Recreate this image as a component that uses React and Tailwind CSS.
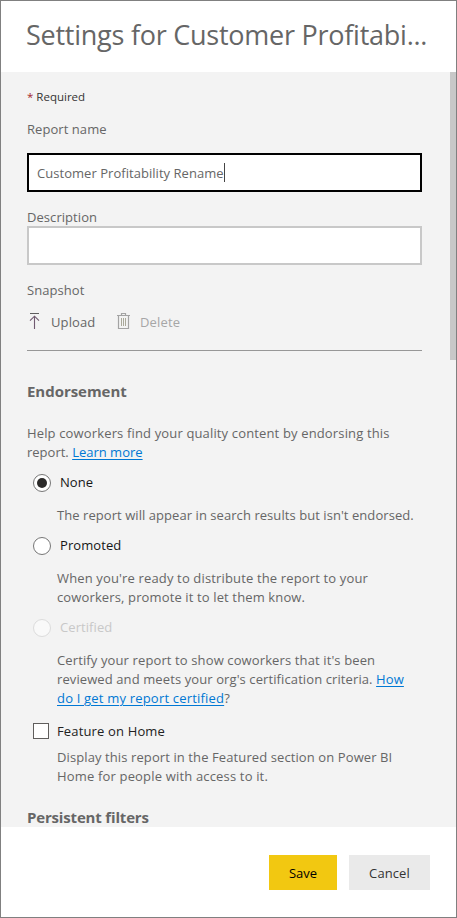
function UploadIcon() {
  return (
    <svg width="12" height="19" viewBox="0 0 12 19" fill="none" className="shrink-0">
      <path d="M1 1.5H10" stroke="#5e5e5e" />
      <path d="M5.5 17V4M1 8.7L5.5 4.2L10 8.7" stroke="#705a70" strokeWidth="1.1" />
    </svg>
  );
}

function TrashIcon() {
  return (
    <svg width="14" height="17" viewBox="0 0 14 17" fill="none" stroke="#a3a3a3" className="shrink-0">
      <path d="M0 2.5H13M4.5 2.5V0.5H8.5V2.5M1.5 2.5V15.5H11.5V2.5" strokeWidth="1.2" />
      <path d="M4.5 5V13M6.5 5V13M8.5 5V13" stroke="#aaa99a" />
    </svg>
  );
}

function Line({ children, className = '' }) {
  return <div className={`h-[19px] whitespace-nowrap leading-[19px] ${className}`}><span>{children}</span></div>;
}

function Radio({ label, checked = false, disabled = false, className = '' }) {
  return (
    <div className={`ml-[6px] flex h-[18px] ${className}`}>
      <span
        className={`flex size-[18px] shrink-0 items-center justify-center rounded-full border ${
          disabled ? 'border-[#dcdcdc] bg-[#f9f9f9]' : 'border-[#767676] bg-white'
        }`}
      >
        {checked && <span className="size-[10px] rounded-full bg-[#2b2a29]" />}
      </span>
      <span className={`ml-[9px] leading-[17px] tracking-[0.08px] ${disabled ? 'text-[#c8c8c8]' : 'text-[#161616]'}`}>{label}</span>
    </div>
  );
}

const link = 'text-[#0078d4] underline underline-offset-2 decoration-1';

export default function App() {
  return (
    <div className="flex h-[918px] w-[457px] flex-col overflow-hidden border border-[#808080] bg-white font-['Open_Sans','Noto_Sans',sans-serif] text-[13px] text-[#666]">
      <header className="h-[71px] shrink-0 pl-[25px]">
        <h1 className="whitespace-nowrap pt-[14px] text-[27px] font-normal leading-[40px] tracking-[-0.25px]"><span>Settings for Customer Profitabi...</span></h1>
      </header>

      <main className="flex h-[755px] shrink-0 overflow-hidden bg-[#f3f3f3]">
        <div className="w-[421px] shrink-0 pl-[26px]">
          <div className="mt-[17px] h-4 text-[11.5px] leading-4 text-[#333]">
            <span className="text-[#a4262c]">*</span> <span className="font-medium">Required</span>
          </div>
          <Line className="mt-[15px] tracking-[0.06px]">Report name</Line>
          <div className="mt-[14px] flex h-[39px] items-center border-2 border-black bg-white pl-2 pt-[2px]">
            <span className="tracking-[0.04px]">Customer Profitability Rename</span>
            <span className="mb-[2px] h-[19px] w-px bg-[#444]" />
          </div>
          <Line className="mt-[15px] pt-px tracking-[0.06px]">Description</Line>
          <div className="h-[39px] border-2 border-[#c8c8c8] bg-white" />
          <Line className="mt-[16px] tracking-[0.06px]">Snapshot</Line>
          <div className="mt-[12px] flex h-[19px] items-center">
            <span className="ml-[2px] flex"><UploadIcon /></span>
            <span className="ml-[10px] w-[45px] pt-[2px] tracking-[0.1px]">Upload</span>
            <span className="ml-[21px] flex"><TrashIcon /></span>
            <span className="ml-[9px] pt-[2px] tracking-[0.15px] text-[#a6a6a6]">Delete</span>
          </div>
          <div className="mt-[19px] h-px bg-[#979797]" />

          <h2 className="mt-[30px] h-[20px] text-[15px] font-bold leading-[20px] tracking-[-0.04px]"><span>Endorsement</span></h2>
          <Line className="mt-[23px] tracking-[0.147px]">Help coworkers find your quality content by endorsing this</Line>
          <Line>report. <a className={link}>Learn more</a></Line>

          <Radio label="None" checked className="mt-[12px]" />
          <Line className="ml-[30px] mt-[14px] tracking-[0.06px]">The report will appear in search results but isn't endorsed.</Line>
          <Radio label="Promoted" className="mt-[12px]" />
          <Line className="ml-[30px] mt-[14px] tracking-[0.147px]">When you're ready to distribute the report to your</Line>
          <Line className="ml-[30px] tracking-[0.13px]">coworkers, promote it to let them know.</Line>
          <Radio label="Certified" disabled className="mt-[12px]" />
          <Line className="ml-[30px] mt-[14px] tracking-[0.12px]">Certify your report to show coworkers that it's been</Line>
          <Line className="ml-[30px] tracking-[0.1px]">reviewed and meets your org's certification criteria. <a className={link}>How</a></Line>
          <Line className="ml-[30px] tracking-[0.19px]"><a className={link}>do I get my report certified</a>?</Line>

          <div className="ml-[6px] mt-[15px] flex h-[16px]">
            <span className="size-[16px] shrink-0 border border-[#605e5c] bg-white" />
            <span className="ml-2 leading-[16px] tracking-[0.15px] text-[#222]">Feature on Home</span>
          </div>
          <Line className="ml-[30px] mt-[9px] tracking-[0.1px]">Display this report in the Featured section on Power BI</Line>
          <Line className="ml-[30px] tracking-[0.17px]">Home for people with access to it.</Line>
          <h2 className="mt-[21px] h-[20px] text-[15px] font-bold leading-[20px] tracking-[-0.17px]"><span>Persistent filters</span></h2>
        </div>
        <div className="ml-[28px] h-[288px] w-[6px] bg-[#c8c8c8]" />
      </main>

      <footer className="flex gap-3 pl-[268px] pt-[28px]">
        <button className="h-[35px] w-[68px] bg-[#f2c811] pt-[2px] text-black">Save</button>
        <button className="h-[35px] w-[81px] bg-[#eaeaea] pt-[2px] tracking-[0.1px] text-[#333]">Cancel</button>
      </footer>
    </div>
  );
}
